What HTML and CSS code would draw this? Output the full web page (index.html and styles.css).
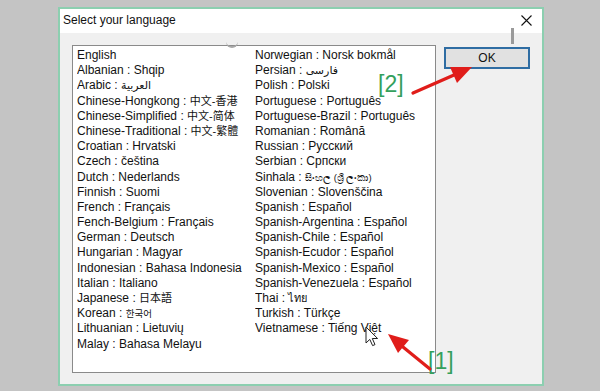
FILE: index.html
```html
<!DOCTYPE html>
<html lang="en">
<head>
    <meta charset="UTF-8">
    <meta name="viewport" content="width=device-width, initial-scale=1.0">
    <title>Select your language</title>
    <link rel="stylesheet" href="styles.css">
</head>
<body>
    <div class="stage">
        <div class="dialog">
            <div class="titlebar">
                <span class="title">Select your language</span>
                <svg class="close" width="11" height="11" viewBox="0 0 11 11">
                    <path d="M0.5 0.5 L10.5 10.5 M10.5 0.5 L0.5 10.5" stroke="#111" stroke-width="1.1" fill="none"/>
                </svg>
            </div>
            <div class="content">
                <ul class="langs">
                    <li>English</li>
                    <li>Albanian : Shqip</li>
                    <li>Arabic : <span class="alt">العربية</span></li>
                    <li>Chinese-Hongkong : <span class="alt">中文-香港</span></li>
                    <li>Chinese-Simplified : <span class="alt">中文-简体</span></li>
                    <li>Chinese-Traditional : <span class="alt">中文-繁體</span></li>
                    <li>Croatian : Hrvatski</li>
                    <li>Czech : čeština</li>
                    <li>Dutch : Nederlands</li>
                    <li>Finnish : Suomi</li>
                    <li>French : Français</li>
                    <li>Fench-Belgium : Français</li>
                    <li>German : Deutsch</li>
                    <li>Hungarian : Magyar</li>
                    <li>Indonesian : Bahasa Indonesia</li>
                    <li>Italian : Italiano</li>
                    <li>Japanese : <span class="alt">日本語</span></li>
                    <li>Korean : <span class="alt small">한국어</span></li>
                    <li>Lithuanian : Lietuvių</li>
                    <li>Malay : Bahasa Melayu</li>
                    <li>Norwegian : Norsk bokmål</li>
                    <li>Persian : <span class="alt">فارسی</span></li>
                    <li>Polish : Polski</li>
                    <li>Portuguese : Português</li>
                    <li>Portuguese-Brazil : Português</li>
                    <li>Romanian : Română</li>
                    <li>Russian : Русский</li>
                    <li>Serbian : Српски</li>
                    <li>Sinhala : <span class="alt small">සිංහල (ශ්‍රී ලංකා)</span></li>
                    <li>Slovenian : Slovenščina</li>
                    <li>Spanish : Español</li>
                    <li>Spanish-Argentina : Español</li>
                    <li>Spanish-Chile : Español</li>
                    <li>Spanish-Ecudor : Español</li>
                    <li>Spanish-Mexico : Español</li>
                    <li>Spanish-Venezuela : Español</li>
                    <li>Thai : <span class="alt">ไทย</span></li>
                    <li>Turkish : Türkçe</li>
                    <li>Vietnamese : Tiếng Việt</li>
                </ul>
                <button class="ok" type="button">OK</button>
            </div>
        </div>

        <!-- bits left over from the screen capture -->
        <div class="scrap-bar"></div>
        <div class="scrap-g"></div>

        <!-- annotations -->
        <span class="tag tag2">[2]</span>
        <span class="tag tag1">[1]</span>
        <svg class="marks" width="600" height="391" viewBox="0 0 600 391">
            <line x1="413" y1="93" x2="454" y2="75" stroke="#e01d1a" stroke-width="3.2" stroke-linecap="round"/>
            <polygon points="472,67 457,83 450,67" fill="#e01d1a"/>
            <line x1="430" y1="369" x2="403" y2="347" stroke="#e01d1a" stroke-width="3.2" stroke-linecap="round"/>
            <polygon points="388,334 409,340 398,353" fill="#e01d1a"/>
            <path d="M366 327 L366 343 L369.8 339.4 L372.6 345.6 L375 344.6 L372.3 338.5 L377.6 338.5 Z" fill="#fff" stroke="#222" stroke-width="1" stroke-linejoin="round"/>
        </svg>
    </div>
</body>
</html>
```

FILE: styles.css
```css
body{
    margin: 0;
    background: #c4c4c4;
    font-family: "Liberation Sans", "Noto Sans CJK SC", "DejaVu Sans", sans-serif;
}
.stage{
    position: relative;
    width: 600px;
    height: 391px;
    padding-top: 7px;
    box-sizing: border-box;
}
.dialog{
    margin-left: 58px;
    width: 486px;
    height: 379px;
    box-sizing: border-box;
    border: 2px solid #8ccfb0;
    background: #f0f0f0;
    display: flex;
    flex-direction: column;
}
.titlebar{
    height: 24px;
    background: #fff;
    display: flex;
    align-items: center;
    justify-content: space-between;
    padding: 0 10px 0 3px;
}
.title{
    font-size: 12px;
    color: #111;
    margin-top: -2px;
}
.close{
    margin-top: -2px;
}
.content{
    flex: 1;
    display: flex;
    align-items: flex-start;
    gap: 8px;
    padding: 12px 0 11px 12px;
}
.langs{
    list-style: none;
    margin: 0;
    width: 364px;
    height: 100%;
    box-sizing: border-box;
    padding: 2px 4px 1px;
    background: #fff;
    border: 1px solid #8a8a8a;
    display: grid;
    grid-template-rows: repeat(20, 15.2px);
    grid-template-columns: 178px 1fr;
    grid-auto-flow: column;
    font-size: 12px;
    line-height: 15px;
    color: #111;
    white-space: nowrap;
}
.langs li{
    height: 15px;
    overflow: hidden;
}
.alt{
    font-size: 11px;
    line-height: 11px;
}
.small{
    font-size: 9.5px;
}
.ok{
    width: 86px;
    height: 22px;
    margin-top: 2px;
    background: #e1e1e1;
    border: 2px solid #2f6da3;
    font-family: inherit;
    font-size: 12px;
    color: #111;
    padding: 0;
}
.scrap-bar{
    position: absolute;
    left: 511px;
    top: 28px;
    width: 3px;
    height: 16px;
    background: #9a9a9a;
}
.scrap-g{
    position: absolute;
    left: 226px;
    top: 40px;
    width: 12px;
    height: 8px;
    border-bottom: 2px solid #a8a8a8;
    border-radius: 0 0 6px 6px;
    box-sizing: border-box;
}
.tag{
    position: absolute;
    font-family: "Liberation Sans", sans-serif;
    font-size: 23px;
    line-height: 23px;
    color: #34a05c;
}
.tag2{
    left: 378px;
    top: 73px;
}
.tag1{
    left: 428px;
    top: 350px;
}
.marks{
    position: absolute;
    left: 0;
    top: 0;
}
```
